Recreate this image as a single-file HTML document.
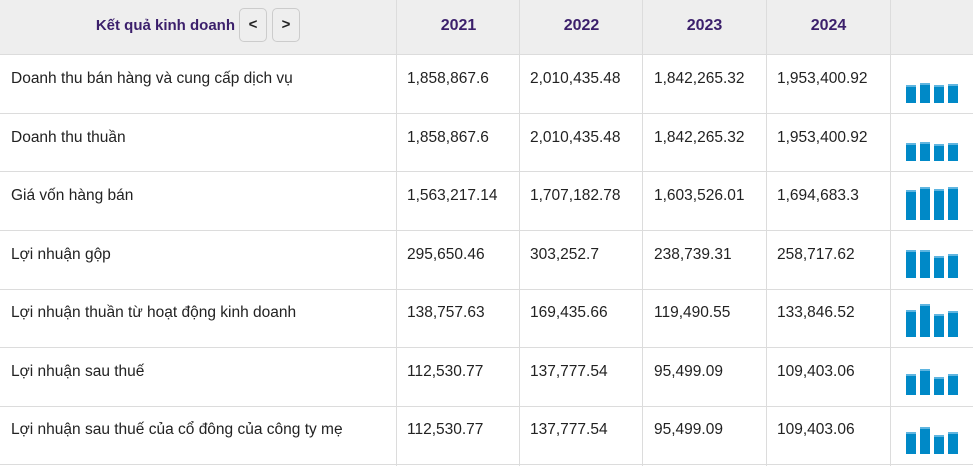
<!DOCTYPE html>
<html><head><meta charset="utf-8"><style>
body{margin:0;width:973px;height:466px;background:#fff;font-family:"Liberation Sans",sans-serif;overflow:hidden;position:relative}
.hd{position:absolute;left:0;top:0;width:973px;height:54px;background:#eeeeee;border-bottom:1px solid #dcdcdc}
.v{position:absolute;top:0;width:1px;height:466px;background:#dcdcdc}
.h{position:absolute;left:0;width:973px;height:1px;background:#dcdcdc}
.t{position:absolute;font-size:15.5px;color:#222;white-space:nowrap;margin-top:2px}
.yr{position:absolute;top:17px;font-size:16px;font-weight:bold;color:#3b1f6b;text-align:center;width:123px}
.btn{position:absolute;top:8px;width:28px;height:34px;border:1px solid #ccc;border-radius:5px;box-sizing:border-box;font-size:15px;color:#222;text-align:center;line-height:31px;font-weight:bold}
.b{position:absolute;width:10px;background:#0089c7;border-top:2px solid #5fb5e0;box-sizing:border-box}
</style></head><body>
<div class="hd"></div>
<div class="yr" style="left:0;width:235px;text-align:right;top:17px;font-size:15px">Kết quả kinh doanh</div>
<div class="btn" style="left:239px">&lt;</div>
<div class="btn" style="left:272px">&gt;</div>
<div class="yr" style="left:397px">2021</div>
<div class="yr" style="left:520px">2022</div>
<div class="yr" style="left:643px">2023</div>
<div class="yr" style="left:767px">2024</div>
<div class="v" style="left:396px"></div><div class="v" style="left:519px"></div><div class="v" style="left:642px"></div><div class="v" style="left:766px"></div><div class="v" style="left:890px"></div>
<div class="h" style="top:113px"></div><div class="h" style="top:171px"></div><div class="h" style="top:230px"></div><div class="h" style="top:289px"></div><div class="h" style="top:347px"></div><div class="h" style="top:406px"></div><div class="h" style="top:464px"></div>

<div class="t" style="left:11px;top:68px">Doanh thu bán hàng và cung cấp dịch vụ</div>
<div class="t" style="left:407px;top:68px">1,858,867.6</div><div class="t" style="left:530px;top:68px">2,010,435.48</div><div class="t" style="left:654px;top:68px">1,842,265.32</div><div class="t" style="left:777px;top:68px">1,953,400.92</div>

<div class="t" style="left:11px;top:127px">Doanh thu thuần</div>
<div class="t" style="left:407px;top:127px">1,858,867.6</div><div class="t" style="left:530px;top:127px">2,010,435.48</div><div class="t" style="left:654px;top:127px">1,842,265.32</div><div class="t" style="left:777px;top:127px">1,953,400.92</div>

<div class="t" style="left:11px;top:185px">Giá vốn hàng bán</div>
<div class="t" style="left:407px;top:185px">1,563,217.14</div><div class="t" style="left:530px;top:185px">1,707,182.78</div><div class="t" style="left:654px;top:185px">1,603,526.01</div><div class="t" style="left:777px;top:185px">1,694,683.3</div>

<div class="t" style="left:11px;top:244px">Lợi nhuận gộp</div>
<div class="t" style="left:407px;top:244px">295,650.46</div><div class="t" style="left:530px;top:244px">303,252.7</div><div class="t" style="left:654px;top:244px">238,739.31</div><div class="t" style="left:777px;top:244px">258,717.62</div>

<div class="t" style="left:11px;top:302px">Lợi nhuận thuần từ hoạt động kinh doanh</div>
<div class="t" style="left:407px;top:302px">138,757.63</div><div class="t" style="left:530px;top:302px">169,435.66</div><div class="t" style="left:654px;top:302px">119,490.55</div><div class="t" style="left:777px;top:302px">133,846.52</div>

<div class="t" style="left:11px;top:361px">Lợi nhuận sau thuế</div>
<div class="t" style="left:407px;top:361px">112,530.77</div><div class="t" style="left:530px;top:361px">137,777.54</div><div class="t" style="left:654px;top:361px">95,499.09</div><div class="t" style="left:777px;top:361px">109,403.06</div>

<div class="t" style="left:11px;top:419px">Lợi nhuận sau thuế của cổ đông của công ty mẹ</div>
<div class="t" style="left:407px;top:419px">112,530.77</div><div class="t" style="left:530px;top:419px">137,777.54</div><div class="t" style="left:654px;top:419px">95,499.09</div><div class="t" style="left:777px;top:419px">109,403.06</div>

<div class="b" style="left:906px;top:85px;height:18px"></div><div class="b" style="left:920px;top:83px;height:20px"></div><div class="b" style="left:934px;top:85px;height:18px"></div><div class="b" style="left:948px;top:84px;height:19px"></div>
<div class="b" style="left:906px;top:143px;height:18px"></div><div class="b" style="left:920px;top:142px;height:19px"></div><div class="b" style="left:934px;top:144px;height:17px"></div><div class="b" style="left:948px;top:143px;height:18px"></div>
<div class="b" style="left:906px;top:190px;height:30px"></div><div class="b" style="left:920px;top:187px;height:33px"></div><div class="b" style="left:934px;top:189px;height:31px"></div><div class="b" style="left:948px;top:187px;height:33px"></div>
<div class="b" style="left:906px;top:250px;height:28px"></div><div class="b" style="left:920px;top:250px;height:28px"></div><div class="b" style="left:934px;top:256px;height:22px"></div><div class="b" style="left:948px;top:254px;height:24px"></div>
<div class="b" style="left:906px;top:310px;height:27px"></div><div class="b" style="left:920px;top:304px;height:33px"></div><div class="b" style="left:934px;top:314px;height:23px"></div><div class="b" style="left:948px;top:311px;height:26px"></div>
<div class="b" style="left:906px;top:374px;height:21px"></div><div class="b" style="left:920px;top:369px;height:26px"></div><div class="b" style="left:934px;top:377px;height:18px"></div><div class="b" style="left:948px;top:374px;height:21px"></div>
<div class="b" style="left:906px;top:432px;height:22px"></div><div class="b" style="left:920px;top:427px;height:27px"></div><div class="b" style="left:934px;top:435px;height:19px"></div><div class="b" style="left:948px;top:432px;height:22px"></div>
</body></html>
